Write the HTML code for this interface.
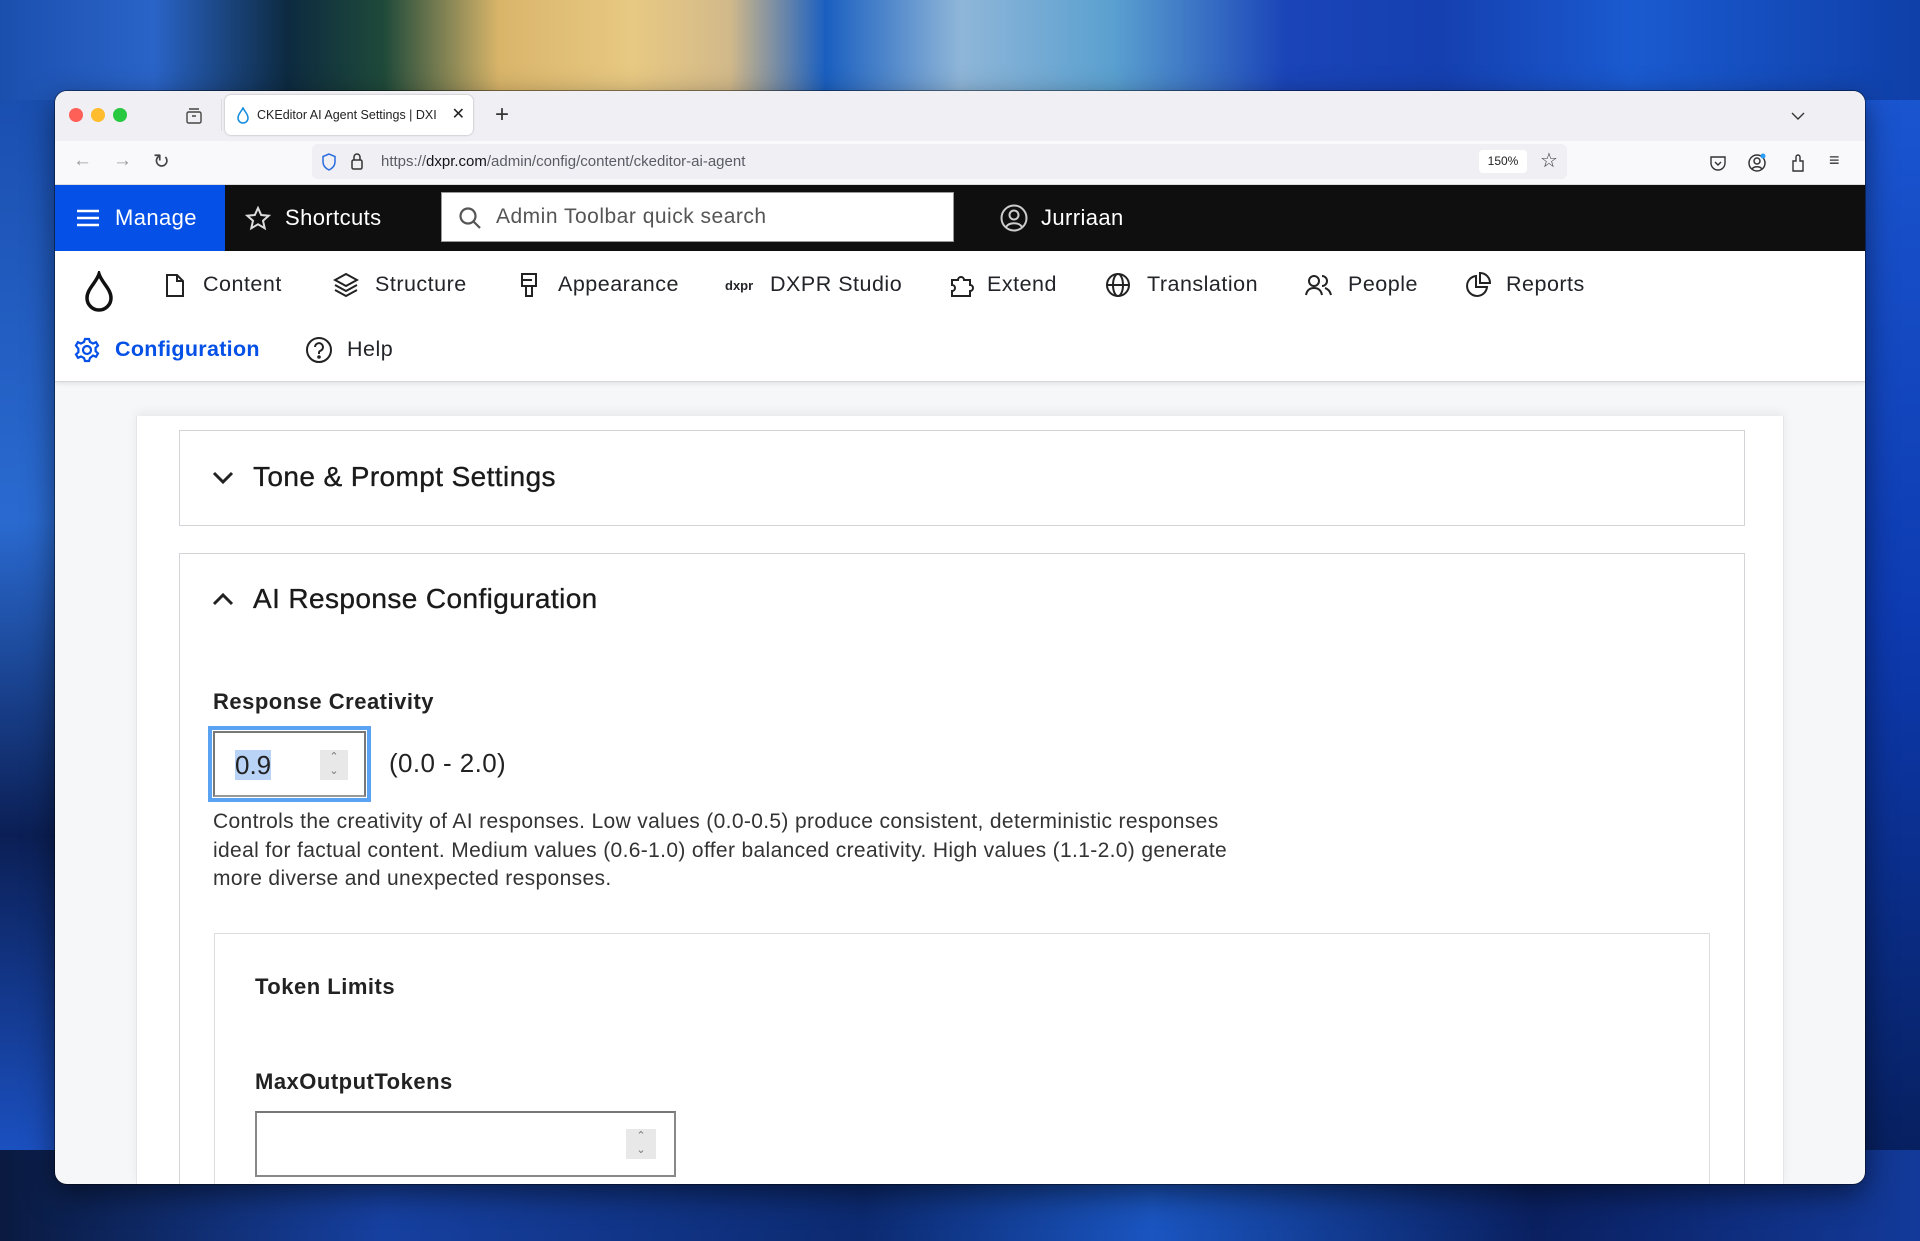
<!DOCTYPE html>
<html><head><meta charset="utf-8"><style>
*{box-sizing:border-box;margin:0;padding:0}
html,body{overflow:hidden}
body{width:1920px;height:1241px;position:relative;font-family:"Liberation Sans",Arial,sans-serif;
background:
linear-gradient(90deg,#1b4fae 0%,#2a64c8 8%,#0d2a40 15%,#1f4a3a 20%,#d9b56a 26%,#e8c983 33%,#d2b98a 38%,#1a5fc0 43%,#8fb6d8 50%,#5aa0d0 58%,#1a44b8 67%,#1540b0 75%,#1a5ad0 85%,#0f3fa8 100%);}
.abs{position:absolute}
.bgb{position:absolute;left:0;top:1150px;width:1920px;height:91px;background:linear-gradient(90deg,#0a1a40,#1640a0 20%,#0c2a70 45%,#1a55c0 60%,#0a2060 80%,#133a9a)}
.bgl{position:absolute;left:0;top:100px;width:60px;height:1050px;background:linear-gradient(180deg,#1a4fb0,#2a6ad0 40%,#0b1f55 70%,#1b50c0)}
.bgr{position:absolute;right:0;top:100px;width:60px;height:1050px;background:linear-gradient(180deg,#1a55d0,#0d3ab0 50%,#072060)}
.win{position:absolute;left:55px;top:91px;width:1810px;height:1093px;border-radius:12px;overflow:hidden;background:#f6f7f9;box-shadow:0 0 0 1px rgba(0,0,0,.4),0 10px 30px rgba(0,0,0,.5)}
.tabbar{position:absolute;left:0;top:0;width:1810px;height:50px;background:#f0f0f4}
.urlrow{position:absolute;left:0;top:50px;width:1810px;height:44px;background:#f9f9fb;border-bottom:1px solid #ddd}
.dot{position:absolute;top:17px;width:14px;height:14px;border-radius:50%}
.tab{position:absolute;left:170px;top:4px;width:248px;height:40px;background:#fff;border-radius:6px;box-shadow:0 0 2px rgba(0,0,0,.3);font-size:12.5px;color:#222;line-height:40px;padding-left:32px}
.url{position:absolute;left:257px;top:3px;width:1255px;height:35px;background:#f0f0f4;border-radius:6px;font-size:15px;line-height:35px;color:#5b5b66;padding-left:69px}
.url b{font-weight:normal;color:#15141a}
.black{position:absolute;left:0;top:94px;width:1810px;height:66px;background:#0f0f0f;color:#fff;font-size:22px;letter-spacing:.4px}
.manage{position:absolute;left:0;top:0;width:170px;height:66px;background:#0550e6}
.search{position:absolute;left:386px;top:7px;width:513px;height:50px;background:#fff;border:1px solid #999;color:#555;font-size:21px;line-height:48px;padding-left:54px;letter-spacing:.5px}
.nav{position:absolute;left:0;top:160px;width:1810px;height:131px;background:#fff;border-bottom:1px solid #d8d8dc;box-shadow:0 2px 4px rgba(0,0,0,.08);font-size:21.5px;color:#232429;letter-spacing:.5px}
.nav span{position:absolute;line-height:26px}
.nav svg{position:absolute}
.card{position:absolute;left:81px;top:325px;width:1648px;height:768px;background:#fff;box-shadow:0 -4px 10px rgba(0,0,0,.06);border-left:1px solid #e5e5ea;border-right:1px solid #e5e5ea;overflow:hidden}
.box{position:absolute;border:1.5px solid #d4d4d8;background:#fff}
.h{position:absolute;font-size:28px;color:#1a1a1a;letter-spacing:.4px;-webkit-text-stroke:.35px #1a1a1a}
.lbl{position:absolute;font-size:22px;font-weight:bold;color:#222;letter-spacing:.5px}
.desc{position:absolute;font-size:21px;color:#333;line-height:28.5px;width:1060px;letter-spacing:.35px}
</style></head><body>
<div class="bgl"></div><div class="bgr"></div><div class="bgb"></div>
<div class="win">
 <div class="tabbar">
  <div class="dot" style="left:14px;background:#fe5f57"></div>
  <div class="dot" style="left:36px;background:#febc2e"></div>
  <div class="dot" style="left:58px;background:#28c840"></div>
  <svg class="abs" style="left:130px;top:16px" width="18" height="18" viewBox="0 0 18 18" fill="none" stroke="#444" stroke-width="1.4"><rect x="2" y="5" width="14" height="11" rx="1.5"/><path d="M4 2h10M7 9h4"/></svg>
  <div style="position:absolute;left:166px;top:8px;width:1px;height:32px;background:#ddd"></div>
  <div class="tab">CKEditor AI Agent Settings | DXI
   <svg class="abs" style="left:11px;top:12px" width="14" height="17" viewBox="0 0 14 17" fill="none" stroke="#1a8fe0" stroke-width="1.6"><path d="M7 1C5 5 2 7 2 11a5 5 0 0 0 10 0c0-4-3-6-5-10z"/></svg>
   <span style="position:absolute;right:8px;top:0;font-size:16px">✕</span></div>
  <div class="abs" style="left:440px;top:10px;font-size:24px;color:#333;font-weight:300">+</div>
  <svg class="abs" style="left:1736px;top:20px" width="14" height="10" viewBox="0 0 14 10" fill="none" stroke="#333" stroke-width="1.4"><path d="M1 2l6 6 6-6"/></svg>
 </div>
 <div class="urlrow">
  <div class="abs" style="left:18px;top:9px;font-size:19px;color:#999">←</div>
  <div class="abs" style="left:58px;top:9px;font-size:19px;color:#999">→</div>
  <div class="abs" style="left:98px;top:8px;font-size:20px;color:#444">↻</div>
  <div class="url">https://<b>dxpr.com</b>/admin/config/content/ckeditor-ai-agent
   <svg class="abs" style="left:9px;top:9px" width="16" height="18" viewBox="0 0 16 18" fill="none" stroke="#2a6cdf" stroke-width="1.5"><path d="M8 1L2 3.5V9c0 4 3 6.5 6 8 3-1.5 6-4 6-8V3.5z"/></svg>
   <svg class="abs" style="left:38px;top:8px" width="14" height="19" viewBox="0 0 14 19" fill="none" stroke="#333" stroke-width="1.5"><rect x="2" y="8" width="10" height="9" rx="1.5"/><path d="M4 8V5a3 3 0 0 1 6 0v3"/></svg>
   <div class="abs" style="left:1167px;top:6px;width:48px;height:23px;background:#fff;border-radius:4px;font-size:12px;line-height:23px;text-align:center;color:#222">150%</div>
   <div class="abs" style="left:1228px;top:0;font-size:20px;color:#333">☆</div>
  </div>
  <svg class="abs" style="left:1654px;top:14px" width="18" height="17" viewBox="0 0 18 17" fill="none" stroke="#333" stroke-width="1.4"><path d="M2 2h14v6a7 7 0 0 1-14 0z M6 7l3 3 3-3"/></svg>
  <svg class="abs" style="left:1692px;top:12px" width="20" height="20" viewBox="0 0 20 20" fill="none" stroke="#333" stroke-width="1.5"><circle cx="10" cy="10" r="8"/><circle cx="10" cy="8" r="3"/><path d="M5 16c2-3 8-3 10 0"/><circle cx="16" cy="3" r="2.5" fill="#2a9df4" stroke="none"/></svg>
  <svg class="abs" style="left:1734px;top:12px" width="18" height="20" viewBox="0 0 18 20" fill="none" stroke="#333" stroke-width="1.4"><path d="M4 18V8h3V4a2 2 0 0 1 4 0v4h3v10z"/></svg>
  <div class="abs" style="left:1774px;top:9px;font-size:18px;color:#333">≡</div>
 </div>
 <div class="black">
  <div class="manage">
   <svg class="abs" style="left:22px;top:24px" width="22" height="18" viewBox="0 0 22 18" stroke="#fff" stroke-width="2.4"><path d="M0 2h22M0 9h22M0 16h22"/></svg>
   <span class="abs" style="left:60px;top:20px">Manage</span>
  </div>
  <svg class="abs" style="left:190px;top:21px" width="26" height="25" viewBox="0 0 26 25" fill="none" stroke="#ddd" stroke-width="2"><path d="M13 2l3.2 7 7.5.7-5.7 5 1.7 7.5L13 18.3 6.3 22.2 8 14.7l-5.7-5 7.5-.7z"/></svg>
  <span class="abs" style="left:230px;top:20px">Shortcuts</span>
  <div class="search">Admin Toolbar quick search
   <svg class="abs" style="left:16px;top:13px" width="24" height="24" viewBox="0 0 24 24" fill="none" stroke="#555" stroke-width="2.2"><circle cx="10" cy="10" r="7.5"/><path d="M15.5 15.5L22 22"/></svg></div>
  <svg class="abs" style="left:945px;top:19px" width="28" height="28" viewBox="0 0 28 28" fill="none" stroke="#ccc" stroke-width="2"><circle cx="14" cy="14" r="12.5"/><circle cx="14" cy="11" r="4.5"/><path d="M6 23c3-5 13-5 16 0"/></svg>
  <span class="abs" style="left:986px;top:20px">Jurriaan</span>
 </div>
 <div class="nav">
  <svg style="left:29px;top:20px" width="30" height="42" viewBox="0 0 30 42" fill="none" stroke="#111" stroke-width="3.5"><path d="M15 3C12 12 3 18 3 27a12 12 0 0 0 24 0C27 18 18 12 15 3z"/></svg>
  <svg style="left:110px;top:22px" width="20" height="25" viewBox="0 0 20 25" fill="none" stroke="#222" stroke-width="2"><path d="M2 2h10l6 6v15H2z M12 2v6h6"/></svg>
  <span style="left:148px;top:20px">Content</span>
  <svg style="left:278px;top:21px" width="26" height="26" viewBox="0 0 26 26" fill="none" stroke="#222" stroke-width="2"><path d="M13 2L2 8l11 6 11-6z M2 13l11 6 11-6 M2 18l11 6 11-6"/></svg>
  <span style="left:320px;top:20px">Structure</span>
  <svg style="left:464px;top:21px" width="20" height="27" viewBox="0 0 20 27" fill="none" stroke="#222" stroke-width="2"><path d="M3 2h14v12H3z M3 8h10 M7 14v10h6V14"/></svg>
  <span style="left:503px;top:20px">Appearance</span>
  <span style="left:670px;top:22px;font-size:13px;font-weight:bold;letter-spacing:0">dxpr</span>
  <span style="left:715px;top:20px">DXPR Studio</span>
  <svg style="left:893px;top:21px" width="28" height="26" viewBox="0 0 28 26" fill="none" stroke="#222" stroke-width="2"><path d="M4 8h6a3 3 0 1 1 6 0h6v5a3 3 0 1 1 0 6v5H4v-5a3 3 0 1 0 0-6z"/></svg>
  <span style="left:932px;top:20px">Extend</span>
  <svg style="left:1050px;top:21px" width="26" height="26" viewBox="0 0 26 26" fill="none" stroke="#222" stroke-width="2"><circle cx="13" cy="13" r="11"/><ellipse cx="13" cy="13" rx="5" ry="11"/><path d="M2 13h22"/></svg>
  <span style="left:1092px;top:20px">Translation</span>
  <svg style="left:1250px;top:23px" width="28" height="22" viewBox="0 0 28 22" fill="none" stroke="#222" stroke-width="2"><circle cx="9" cy="7" r="5"/><path d="M1 21c1-5 4-7 8-7s7 2 8 7"/><path d="M17 2a5 5 0 0 1 0 10 M20 14c3 1 5 3 6 7"/></svg>
  <span style="left:1293px;top:20px">People</span>
  <svg style="left:1410px;top:21px" width="26" height="26" viewBox="0 0 26 26" fill="none" stroke="#222" stroke-width="2"><path d="M11 4a10 10 0 1 0 11 11H11z M15 1v10h10A10 10 0 0 0 15 1z"/></svg>
  <span style="left:1451px;top:20px">Reports</span>
  <svg style="left:19px;top:86px" width="26" height="26" viewBox="0 0 26 26" fill="none" stroke="#0550e6" stroke-width="2.2"><circle cx="13" cy="13" r="4"/><path d="M11 2h4l1 3 3 1.5 3-1.3 2 3.4-2.4 2.2v3.4l2.4 2.2-2 3.4-3-1.3L16 21l-1 3h-4l-1-3-3-1.5-3 1.3-2-3.4 2.4-2.2v-3.4L1.9 8.6l2-3.4 3 1.3L10 5z"/></svg>
  <span style="left:60px;top:85px;color:#0550e6;font-weight:bold;letter-spacing:.3px">Configuration</span>
  <svg style="left:250px;top:85px" width="28" height="28" viewBox="0 0 28 28" fill="none" stroke="#222" stroke-width="2"><circle cx="14" cy="14" r="12"/><path d="M10 11a4 4 0 1 1 5 4c-1 .4-1 1-1 3"/><circle cx="14" cy="21" r=".8" fill="#222"/></svg>
  <span style="left:292px;top:85px">Help</span>
 </div>
 <div class="card">
  <div class="box" style="left:42px;top:14px;width:1566px;height:96px">
   <svg class="abs" style="left:32px;top:40px" width="22" height="14" viewBox="0 0 22 14" fill="none" stroke="#222" stroke-width="3"><path d="M2 2l9 9 9-9"/></svg>
   <div class="h" style="left:73px;top:30px">Tone &amp; Prompt Settings</div>
  </div>
  <div class="box" style="left:42px;top:137px;width:1566px;height:631px;border-bottom:none">
   <svg class="abs" style="left:32px;top:38px" width="22" height="14" viewBox="0 0 22 14" fill="none" stroke="#222" stroke-width="3"><path d="M2 12l9-9 9 9"/></svg>
   <div class="h" style="left:73px;top:29px">AI Response Configuration</div>
   <div class="lbl" style="left:33px;top:135px">Response Creativity</div>
   <div class="abs" style="left:28px;top:172px;width:163px;height:76px;border:4px solid #5aa2f2;background:#fff">
    <div class="abs" style="left:1px;top:1px;width:153px;height:66px;border:2px solid #777;border-bottom-color:#999"></div>
    <div class="abs" style="left:23px;top:20px;font-size:26px;color:#222;background:#b9d3f7;line-height:30px">0.9</div>
    <div class="abs" style="left:108px;top:20px;width:28px;height:30px;background:#e8e8e8;color:#777;font-size:11px;text-align:center;line-height:14px">&#8963;<br>&#8964;</div>
   </div>
   <div class="abs" style="left:209px;top:194px;font-size:26px;color:#222;letter-spacing:.4px">(0.0 - 2.0)</div>
   <div class="desc" style="left:33px;top:254px">Controls the creativity of AI responses. Low values (0.0-0.5) produce consistent, deterministic responses<br>ideal for factual content. Medium values (0.6-1.0) offer balanced creativity. High values (1.1-2.0) generate<br>more diverse and unexpected responses.</div>
   <div class="box" style="left:34px;top:379px;width:1496px;height:252px;border-color:#ddd;border-bottom:none">
    <div class="lbl" style="left:40px;top:40px">Token Limits</div>
    <div class="lbl" style="left:40px;top:135px">MaxOutputTokens</div>
    <div class="abs" style="left:40px;top:177px;width:421px;height:66px;border:2px solid #888;border-top-color:#777;background:#fff">
     <div class="abs" style="left:369px;top:16px;width:30px;height:30px;background:#e8e8e8;color:#777;font-size:11px;text-align:center;line-height:14px">&#8963;<br>&#8964;</div>
    </div>
   </div>
  </div>
 </div>
</div>
</body></html>
